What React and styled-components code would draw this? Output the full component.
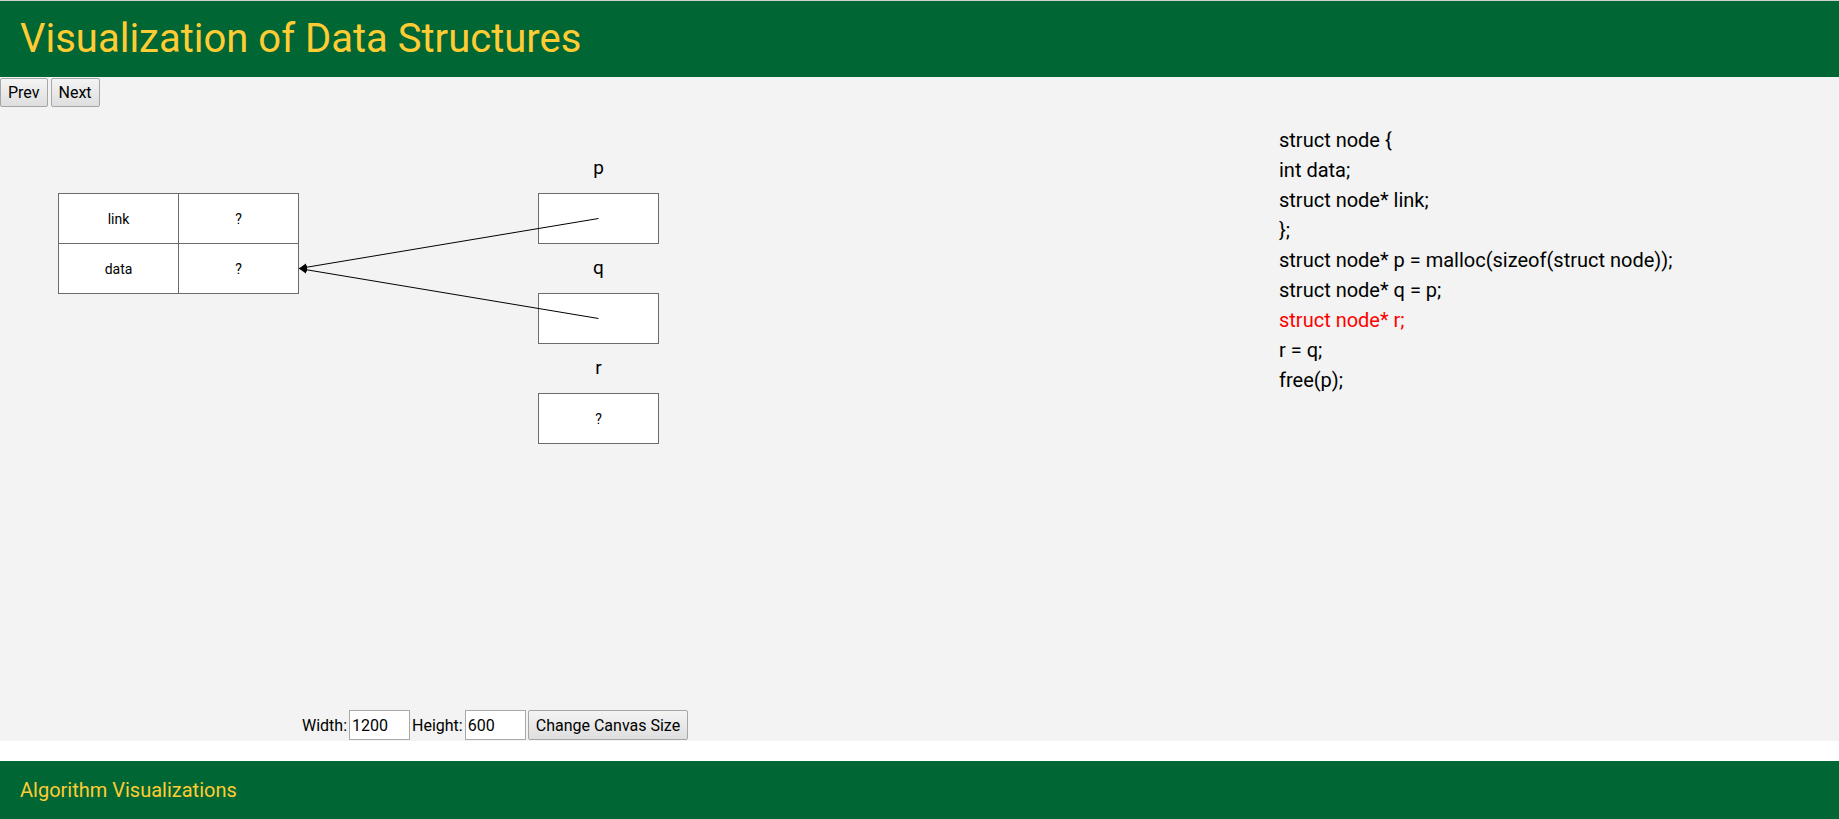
import React from "react";
import styled, { createGlobalStyle } from "styled-components";

const GREEN = "#006633";
const GOLD = "#ffcc33";

const GlobalStyle = createGlobalStyle`
  html, body {
    margin: 0;
    padding: 0;
    background: #ffffff;
    font-family: Roboto, "Liberation Sans", Arial, sans-serif;
  }
`;

const Header = styled.header`
  background: ${GREEN};
  border-top: 1px solid #cfcfcf;
  padding: 14px 20px 15px;
`;

const Title = styled.h1`
  margin: 0;
  font-family: Roboto, sans-serif;
  font-weight: 400;
  font-size: 40px;
  line-height: 47px;
  color: ${GOLD};
`;

const Main = styled.main`
  background: #f2f3f2;
  padding-bottom: 1px;
`;

const NavBar = styled.div`
  display: flex;
  gap: 3px;
  padding-top: 1px;
`;

const Button = styled.button`
  font-family: Roboto, sans-serif;
  font-size: 16px;
  line-height: 19px;
  height: ${(p) => (p.$tall ? 30 : 29)}px;
  padding: 0 ${(p) => p.$px || 7}px;
  color: #000;
  border: 1px solid #a6a6a6;
  border-radius: 2px;
  background: linear-gradient(#f4f4f4, #dedede);
  cursor: pointer;
  box-sizing: border-box;
`;

const Workspace = styled.div`
  display: flex;
  align-items: flex-start;
`;

const Canvas = styled.svg`
  display: block;
  flex: none;
`;

const CodePanel = styled.div`
  padding: 18px 0 0 79px;
  font-family: Roboto, sans-serif;
  font-size: 20px;
  line-height: 30px;
`;

const CodeLine = styled.div`
  color: ${(p) => (p.$active ? "#ff0000" : "#000")};
  white-space: pre;
`;

const Controls = styled.div`
  display: flex;
  align-items: center;
  gap: 2px;
  margin-top: 3px;
  padding-left: 302px;
  height: 30px;
  font-family: Roboto, sans-serif;
  font-size: 16px;
  color: #000;
`;

const SizeInput = styled.input`
  box-sizing: border-box;
  width: 61px;
  height: 30px;
  padding: 0 2px;
  border: 1px solid #a9a9a9;
  background: #fff;
  font-family: Roboto, sans-serif;
  font-size: 16px;
  color: #000;
  outline: none;
`;

const Footer = styled.footer`
  margin-top: 20px;
  background: ${GREEN};
  padding: 18px 20px 20px;
  font-family: Roboto, sans-serif;
  font-size: 20px;
  line-height: 23px;
  color: ${GOLD};
`;

const code = [
  "struct node {",
  "int data;",
  "struct node* link;",
  "};",
  "struct node* p = malloc(sizeof(struct node));",
  "struct node* q = p;",
  "struct node* r;",
  "r = q;",
  "free(p);",
];
const activeLine = 6;

const BOX = "#6b6b6b";

function Diagram() {
  const vars = [
    { name: "p", y: 86.5, pointer: true },
    { name: "q", y: 186.5, pointer: true },
    { name: "r", y: 286.5, pointer: false },
  ];
  const tip = { x: 299, y: 161.5 };
  return (
    <Canvas width="1200" height="600" viewBox="0 0 1200 600">
      <defs>
        <marker
          id="arrowhead"
          viewBox="0 0 10 10"
          refX="10"
          refY="5"
          markerWidth="8"
          markerHeight="8"
          markerUnits="userSpaceOnUse"
          orient="auto"
        >
          <path d="M0,0 L10,5 L0,10 z" fill="#000" />
        </marker>
      </defs>
      <g fontFamily="Roboto, sans-serif" fill="#000">
        <rect x="58.5" y="86.5" width="240" height="100" fill="#fff" stroke={BOX} />
        <line x1="58.5" y1="136.5" x2="298.5" y2="136.5" stroke={BOX} />
        <line x1="178.5" y1="86.5" x2="178.5" y2="186.5" stroke={BOX} />
        <text x="118.5" y="111.5" fontSize="14" textAnchor="middle" dominantBaseline="central">link</text>
        <text x="238.5" y="111.5" fontSize="14" textAnchor="middle" dominantBaseline="central">?</text>
        <text x="118.5" y="161.5" fontSize="14" textAnchor="middle" dominantBaseline="central">data</text>
        <text x="238.5" y="161.5" fontSize="14" textAnchor="middle" dominantBaseline="central">?</text>

        {vars.map((v) => (
          <g key={v.name}>
            <text x="598.5" y={v.y - 26} fontSize="19" textAnchor="middle" dominantBaseline="central">
              {v.name}
            </text>
            <rect x="538.5" y={v.y} width="120" height="50" fill="#fff" stroke={BOX} />
            {!v.pointer && (
              <text x="598.5" y={v.y + 25} fontSize="14" textAnchor="middle" dominantBaseline="central">?</text>
            )}
          </g>
        ))}
        {vars
          .filter((v) => v.pointer)
          .map((v) => (
            <line
              key={"a" + v.name}
              x1="598.5"
              y1={v.y + 25}
              x2={tip.x}
              y2={tip.y}
              stroke="#000"
              strokeWidth="1"
              markerEnd="url(#arrowhead)"
            />
          ))}
      </g>
    </Canvas>
  );
}

export default function App() {
  return (
    <>
      <GlobalStyle />
      <Header>
        <Title>Visualization of Data Structures</Title>
      </Header>
      <Main>
        <NavBar>
          <Button>Prev</Button>
          <Button>Next</Button>
        </NavBar>
        <Workspace>
          <Diagram />
          <CodePanel>
            {code.map((line, i) => (
              <CodeLine key={i} $active={i === activeLine}>
                {line}
              </CodeLine>
            ))}
          </CodePanel>
        </Workspace>
        <Controls>
          <span>Width:</span>
          <SizeInput defaultValue="1200" />
          <span>Height:</span>
          <SizeInput defaultValue="600" />
          <Button $tall>Change Canvas Size</Button>
        </Controls>
      </Main>
      <Footer>Algorithm Visualizations</Footer>
    </>
  );
}
